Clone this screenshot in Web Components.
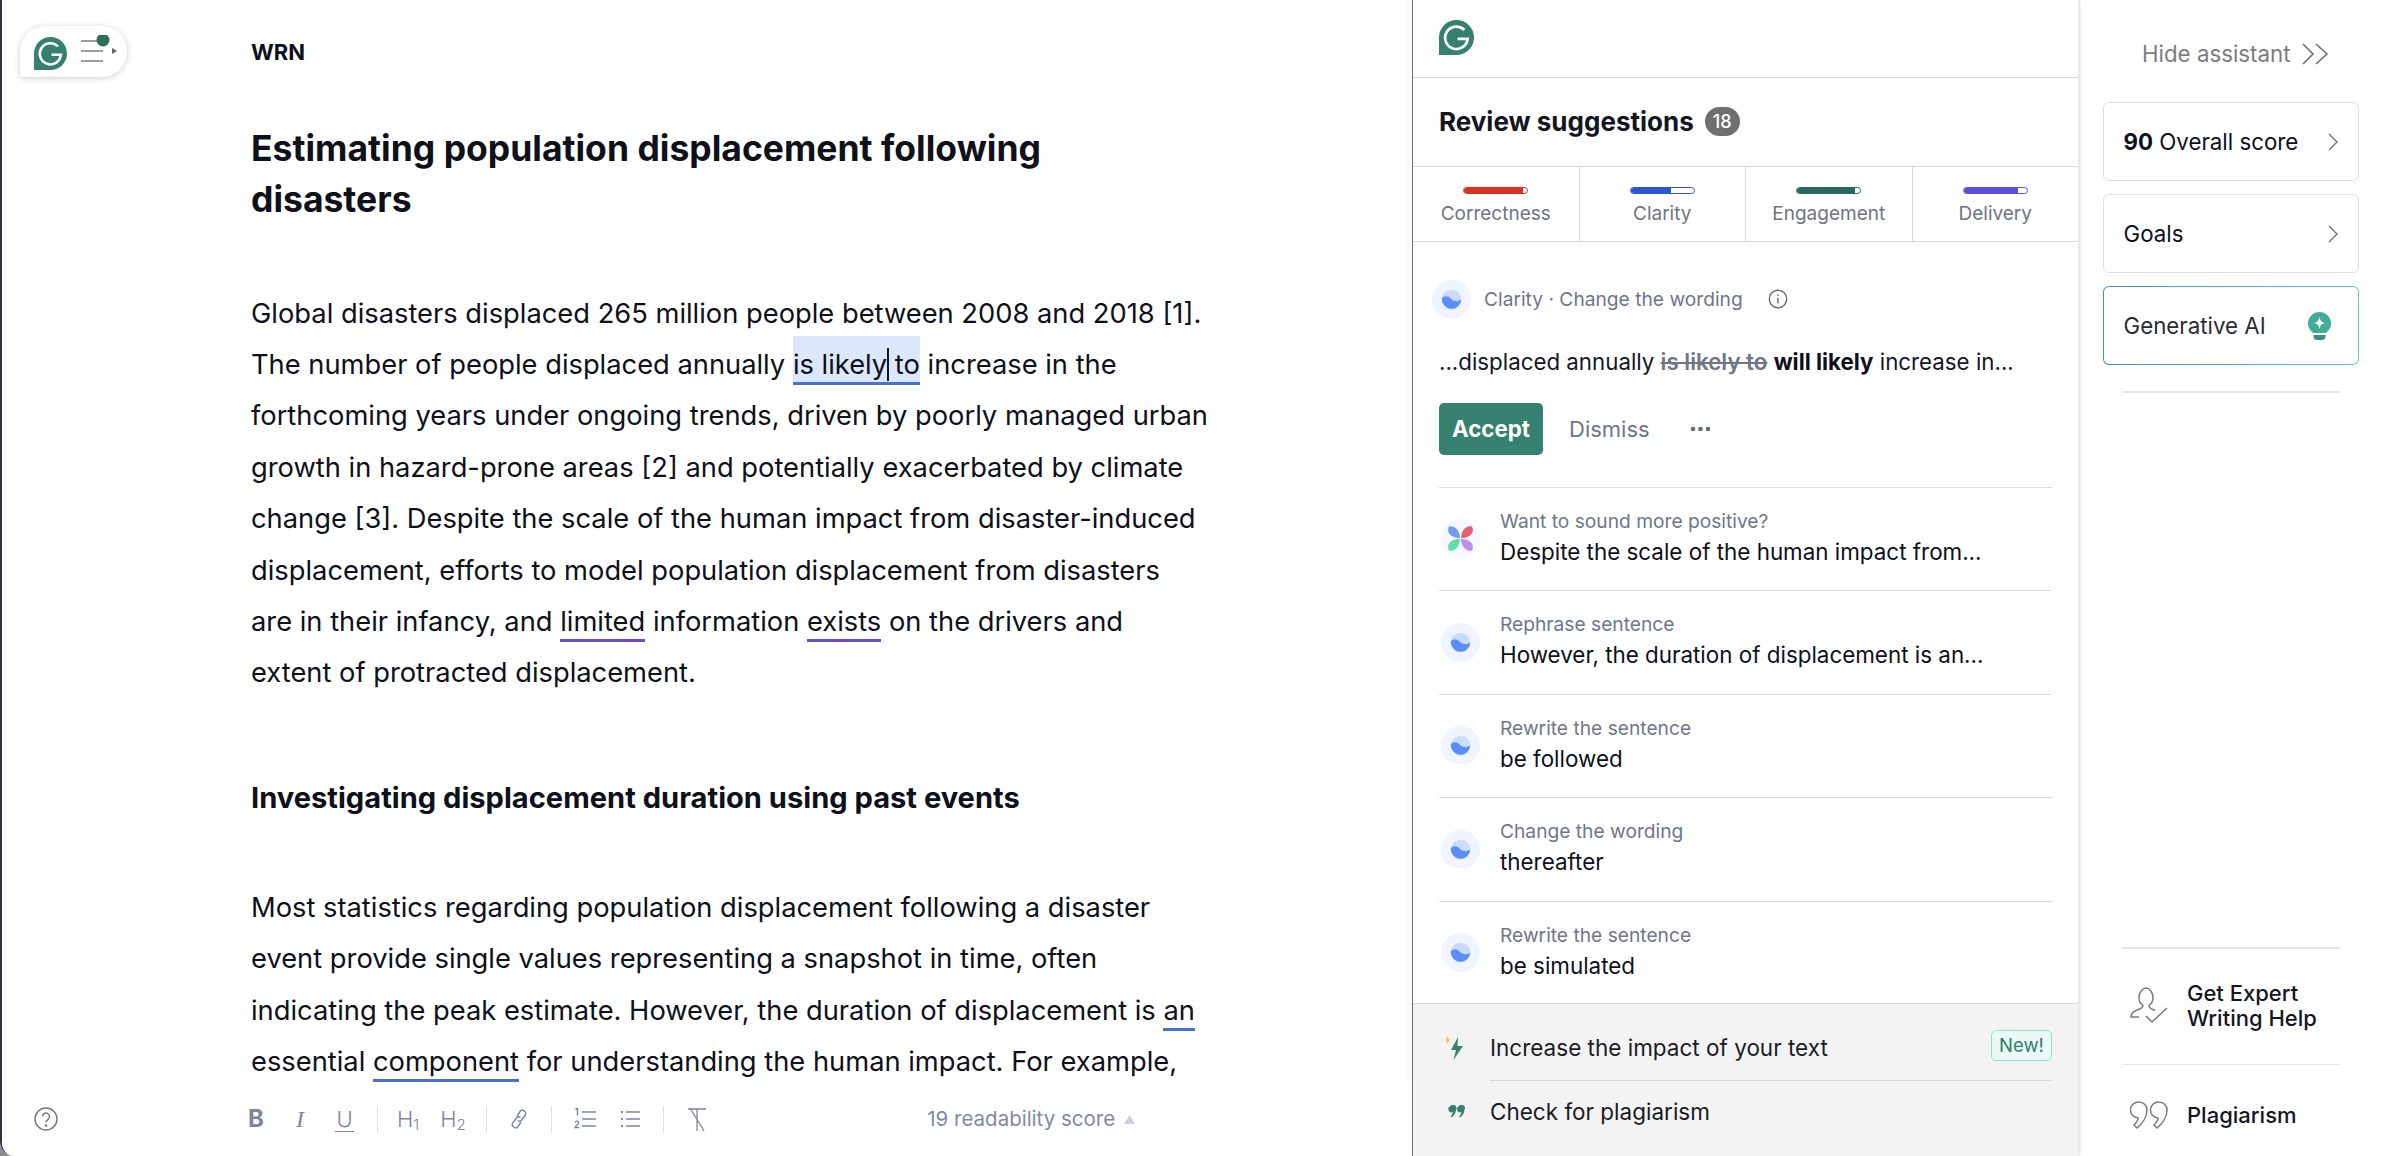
<!DOCTYPE html>
<html lang="en">
<head>
<meta charset="utf-8">
<title>Grammarly editor</title>
<style>
  html, body { margin: 0; height: 100%; background: #8c8c8c; overflow: hidden; }
  body { font-family: Inter, "Liberation Sans", sans-serif; color: #0e101a; }
</style>
</head>
<body>
<g-app>
  <g-editor slot="editor">
    <g-doc-title>Estimating population displacement following disasters</g-doc-title>
    <g-para>Global disasters displaced 265 million people between 2008 and 2018 [1].<br>The number of people displaced annually <g-mark kind="active">is likely<g-caret></g-caret> to</g-mark> increase in the<br>forthcoming years under ongoing trends, driven by poorly managed urban<br>growth in hazard-prone areas [2] and potentially exacerbated by climate<br>change [3]. Despite the scale of the human impact from disaster-induced<br>displacement, efforts to model population displacement from disasters<br>are in their infancy, and <g-mark kind="delivery">limited</g-mark> information <g-mark kind="delivery">exists</g-mark> on the drivers and<br>extent of protracted displacement.</g-para>
    <g-doc-head>Investigating displacement duration using past events</g-doc-head>
    <g-para>Most statistics regarding population displacement following a disaster<br>event provide single values representing a snapshot in time, often<br>indicating the peak estimate. However, the duration of displacement is <g-mark kind="clarity">an</g-mark><br>essential <g-mark kind="clarity">component</g-mark> for understanding the human impact. For example,</g-para>
  </g-editor>
  <g-panel slot="panel"></g-panel>
  <g-rail slot="rail"></g-rail>
</g-app>

<script>
  const LOGO = (size) => `<svg width="${size}" height="${size}" viewBox="0 0 24 24" style="display:block">
    <path d="M12 0a12 12 0 0 1 0 24H0V12A12 12 0 0 1 12 0z" fill="#36806f"/>
    <path d="M17.4 6.8A7.7 7.7 0 1 0 19.6 12.9H12.8" fill="none" stroke="#fff" stroke-width="1.9"/>
  </svg>`;

  const WAVE = `<svg width="39" height="39" viewBox="0 0 40 40" style="display:block;flex:none">
    <circle cx="20" cy="20" r="20" fill="#eff4fe"/>
    <circle cx="20" cy="20" r="10" fill="#c9dcfd"/>
    <path d="M10 19c3-3 6-3 9 0s7 4 11 1a10 10 0 0 1-20-1z" fill="#5b8dfb"/>
  </svg>`;

  const petal = "M18.500 18.500C18.500 13 15 7 9.500 7C7 7 7 9 7 11.500C7 15 12 19 18.500 18.500z";
  const FLOWER = `<svg width="39" height="39" viewBox="0 0 38 38" style="display:block;flex:none">
    <circle cx="19" cy="19" r="19" fill="#f6f8ff"/>
    <path d="${petal}" fill="#6f9bf5"/>
    <path d="${petal}" fill="#e5616f" transform="matrix(-1 0 0 1 38 0)"/>
    <path d="${petal}" fill="#5fdcb0" transform="matrix(1 0 0 -1 0 38)"/>
    <path d="${petal}" fill="#c090e8" transform="matrix(-1 0 0 -1 38 38)"/>
  </svg>`;

  class GApp extends HTMLElement {
    constructor() {
      super();
      this.attachShadow({ mode: 'open' });
      this.shadowRoot.innerHTML = `
        <style>
          :host { display: flex; width: 2402px; height: 1156px; background: #fff; border-bottom-left-radius: 14px; overflow: hidden; }
        </style>
        <slot name="editor"></slot>
        <slot name="panel"></slot>
        <slot name="rail"></slot>`;
    }
  }

  class GEditor extends HTMLElement {
    constructor() {
      super();
      this.attachShadow({ mode: 'open' });
      this.shadowRoot.innerHTML = `
        <style>
          :host { display: block; position: relative; width: 1412px; height: 1156px; box-sizing: border-box; flex: none;
            background: #fff; border-left: 2px solid #2b3442; border-bottom-left-radius: 14px; overflow: hidden; }
          .doc { padding: 36.500px 0 0 249px; width: 1000px; }
          .name { font: 700 22px/30px Inter, sans-serif; color: #0e101a; margin-bottom: 56px; }
          .strip { position: absolute; top: 0; right: 0; width: 6px; height: 1080px; background: #fafafa; }
          g-toolbar { position: absolute; left: -2px; right: 0; bottom: 0; }
          g-pill { position: absolute; left: 18px; top: 26px; }
        </style>
        <div class="doc">
          <div class="name">WRN</div>
          <slot></slot>
        </div>
        <div class="strip"></div>
        <g-pill></g-pill>
        <g-toolbar></g-toolbar>`;
    }
  }

  class GPill extends HTMLElement {
    constructor() {
      super();
      this.attachShadow({ mode: 'open' });
      this.shadowRoot.innerHTML = `
        <style>
          :host { display: block; width: 107px; height: 51px; background: #fff; border-radius: 25px 25px 25px 0;
            box-shadow: 0 1px 6px rgba(0,0,0,.2); }
          .row { display: flex; align-items: center; padding: 9px 0 0 14px; gap: 14px; }
        </style>
        <div class="row">
          ${LOGO(33)}
          <svg width="38" height="36" viewBox="0 0 38 36">
            <path d="M0 6H20M0 16H22M0 26H22" stroke="#7b7b7b" stroke-width="1.500"/>
            <circle cx="22" cy="5" r="6.500" fill="#2f6f5e"/>
            <path d="M31 13l5 3-5 3z" fill="#666"/>
          </svg>
        </div>`;
    }
  }

  class GToolbar extends HTMLElement {
    constructor() {
      super();
      this.attachShadow({ mode: 'open' });
      this.shadowRoot.innerHTML = `
        <style>
          :host { display: block; height: 72px; background: #fff; color: #7f859c; font: 400 19px/24px Inter, sans-serif; }
          .row { display: flex; align-items: center; height: 72px; box-sizing: border-box; position: relative; top: -1px; }
          .help { margin-left: 34px; margin-right: 190px; display: block; }
          .t { display: block; text-align: center; }
          .b { font: 700 24px/24px Inter, sans-serif; width: 16px; }
          .i { font: italic 300 24px/24px "Liberation Serif", serif; width: 10px; margin-left: 31px; }
          .u { font: 300 22px/24px Inter, sans-serif; width: 19px; margin-left: 30px; border-bottom: 1.500px solid #7f859c; height: 24px; }
          .sep { width: 1px; height: 26px; background: #dcdeea; }
          .h { font: 300 22px/24px Inter, sans-serif; }
          .h sub { font-size: 15px; vertical-align: -3px; line-height: 0; }
          .score { margin-left: 220.500px; color: #83899f; font-size: 20.500px; }
          .tri { margin-left: 9px; }
          svg { display: block; }
        </style>
        <div class="row">
          <svg class="help" width="24" height="26" viewBox="0 0 24 26" fill="none" stroke="#7a7a7a" stroke-width="1.500">
            <circle cx="12" cy="13" r="11"/>
            <path d="M8.500 10.500a3.500 3.500 0 1 1 5.500 2.800c-1.300.9-2 1.500-2 3"/>
            <circle cx="12" cy="19.500" r=".6" fill="#7a7a7a"/>
          </svg>
          <span class="t b">B</span>
          <span class="t i">I</span>
          <span class="t u">U</span>
          <span class="sep" style="margin-left:23px"></span>
          <span class="t h" style="margin-left:19px">H<sub>1</sub></span>
          <span class="t h" style="margin-left:21px">H<sub>2</sub></span>
          <span class="sep" style="margin-left:20px"></span>
          <svg style="margin-left:22px" width="20" height="24" viewBox="0 0 20 24" fill="none" stroke="#7f859c" stroke-width="1.400">
            <path d="M8 9l3-4.500a3.200 3.200 0 0 1 5 4l-3.500 4.500a3 3 0 0 1-4 .5"/>
            <path d="M12 15l-3 4.500a3.200 3.200 0 0 1-5-4l3.500-4.500a3 3 0 0 1 4-.5"/>
          </svg>
          <span class="sep" style="margin-left:22px"></span>
          <svg style="margin-left:22px" width="23" height="24" viewBox="0 0 23 24" fill="none" stroke="#7f859c">
            <path d="M1.500 2.500l2-1v7M8 5h14M8 12h14M8 19h14" stroke-width="1.400"/>
            <path d="M1 15.500c1-2 4-1.500 3.500.5-.3 1.200-2.500 2.500-3.500 4.500h4" stroke-width="1.300"/>
          </svg>
          <svg style="margin-left:23px" width="20" height="24" viewBox="0 0 20 24" fill="none" stroke="#7f859c" stroke-width="1.400">
            <path d="M6 5h14M6 12h14M6 19h14"/>
            <path d="M1 5h2M1 12h2M1 19h2" stroke-width="2.200"/>
          </svg>
          <span class="sep" style="margin-left:23px"></span>
          <svg style="margin-left:23px" width="20" height="26" viewBox="0 0 20 26" fill="none" stroke="#7f859c" stroke-width="1.300">
            <path d="M1 3h18M10 3v22M3 2l14 23"/>
          </svg>
          <span class="score">19 readability score</span>
          <svg class="tri" width="11" height="9" viewBox="0 0 11 9"><path d="M5.500 0L11 9H0z" fill="#c9cde0"/></svg>
        </div>`;
    }
  }

  // document blocks, each keeps its own typography
  class GDocTitle extends HTMLElement {
    constructor() {
      super();
      this.attachShadow({ mode: 'open' });
      this.shadowRoot.innerHTML = `
        <style>:host { display: block; font: 700 35.500px/51px Inter, sans-serif; color: #0e101a; width: 860px; margin-bottom: 63px; }</style>
        <slot></slot>`;
    }
  }

  class GDocHead extends HTMLElement {
    constructor() {
      super();
      this.attachShadow({ mode: 'open' });
      this.shadowRoot.innerHTML = `
        <style>:host { display: block; font: 700 29.100px/51px Inter, sans-serif; color: #0e101a; margin: 73px 0 59px; }</style>
        <slot></slot>`;
    }
  }

  class GPara extends HTMLElement {
    constructor() {
      super();
      this.attachShadow({ mode: 'open' });
      this.shadowRoot.innerHTML = `
        <style>:host { display: block; font: 400 27.300px/51.400px Inter, sans-serif; color: #0e101a; white-space: nowrap; }</style>
        <slot></slot>`;
    }
  }

  class GMark extends HTMLElement {
    constructor() {
      super();
      this.attachShadow({ mode: 'open' });
      this.shadowRoot.innerHTML = `
        <style>
          :host { display: inline; padding: 0 0 1.500px; border-bottom: 3px solid #4a6fd4; }
          :host([kind="active"]) { background: #dbe8fb; padding-top: 12px; }
          :host([kind="delivery"]) { border-bottom-color: #6b4bd0; }
        </style>
        <slot></slot>`;
    }
  }

  class GCaret extends HTMLElement {
    constructor() {
      super();
      this.attachShadow({ mode: 'open' });
      this.shadowRoot.innerHTML = `
        <style>:host { display: inline-block; position: relative; width: 0; height: 0; }
          i { position: absolute; left: 0; top: -26px; width: 2px; height: 33px; background: #14161f; }</style>
        <i></i>`;
    }
  }

  class GTab extends HTMLElement {
    constructor() {
      super();
      this.attachShadow({ mode: 'open' });
      const color = this.getAttribute('color');
      const fill = this.getAttribute('fill');
      this.shadowRoot.innerHTML = `
        <style>
          :host { display: flex; flex-direction: column; align-items: center; flex: 1; border-right: 1px solid #d9d9d9;
            font: 400 19px/26px Inter, sans-serif; color: #6f7482; }
          :host(:last-child) { border-right: 0; }
          .bar { width: 65px; height: 7px; box-sizing: border-box; border: 1.200px solid ${color}; border-radius: 4px; margin: 20px 0 7px; background: #fff; overflow: hidden; }
          .fill { height: 100%; width: ${fill}%; background: ${color}; }
        </style>
        <div class="bar"><div class="fill"></div></div>
        <slot></slot>`;
    }
  }

  class GSuggestion extends HTMLElement {
    constructor() {
      super();
      this.attachShadow({ mode: 'open' });
      const icon = this.getAttribute('icon') === 'flower' ? FLOWER : WAVE;
      this.shadowRoot.innerHTML = `
        <style>
          :host { display: flex; align-items: center; gap: 20px; height: 103.500px; box-sizing: border-box; border-top: 1.500px solid #dcdcdc; padding-left: 2px; }
          .label { font: 400 19.200px/24px Inter, sans-serif; color: #6f7689; margin-bottom: 5px; }
          .text { font: 400 22.400px/28px Inter, sans-serif; color: #0e101a; }
          .box { padding-bottom: 3px; }
        </style>
        ${icon}
        <div class="box">
          <div class="label">${this.getAttribute('label')}</div>
          <div class="text"><slot></slot></div>
        </div>`;
    }
  }

  class GPanel extends HTMLElement {
    constructor() {
      super();
      this.attachShadow({ mode: 'open' });
      this.shadowRoot.innerHTML = `
        <style>
          :host { display: flex; flex-direction: column; width: 666px; height: 1156px; flex: none; box-sizing: border-box;
            background: #fff; border-left: 1px solid #6b6b6b; box-shadow: 2px 0 3px rgba(0,0,0,.13); position: relative; z-index: 1; }
          .logo { height: 77.500px; padding: 20px 0 0 26px; box-sizing: border-box; border-bottom: 1.500px solid #d9d9d9; }
          .title { display: flex; align-items: center; gap: 11px; height: 89px; box-sizing: border-box; padding-left: 26px;
            border-bottom: 1.500px solid #d9d9d9; font: 700 26px/30px Inter, sans-serif; color: #14161f; }
          .badge { width: 35px; height: 29px; border-radius: 15px; background: #6f6f6f; color: #fff; font: 500 18px/29px Inter, sans-serif; text-align: center; }
          .tabs { display: flex; height: 75px; box-sizing: border-box; border-bottom: 1.500px solid #d9d9d9; }
          .card { padding: 38px 26px 0; }
          .head { display: flex; align-items: center; margin-left: -7px; color: #6f7689; font: 400 19.200px/39px Inter, sans-serif; }
          .head span { margin-left: 13px; }
          .head svg:last-child { margin-left: 25px; }
          .sample { font: 400 22.300px/32px Inter, sans-serif; color: #14161f; margin-top: 27px; white-space: nowrap; }
          s { color: #6f7689; font-weight: 600; }
          b { font-weight: 700; color: #0e101a; }
          .actions { display: flex; align-items: center; margin-top: 25px; }
          .accept { width: 104px; height: 52px; border-radius: 5px; background: #36806f; color: #fff; font: 700 22.300px/52px Inter, sans-serif; text-align: center; }
          .dismiss { margin-left: 26px; font: 400 22px/52px Inter, sans-serif; color: #6f7689; }
          .dots { margin-left: 40px; display: block; }
          .list { padding: 0 26px; height: 516px; box-sizing: border-box; margin-top: 32px; }
          .foot { flex: 1; background: #f3f3f3; border-top: 1.500px solid #d9d9d9; padding: 0 26px 0 32px; }
          .f { display: flex; align-items: center; box-sizing: border-box; font: 400 22.500px/28px Inter, sans-serif; color: #1a1c25; }
          .f svg { width: 45px; flex: none; }
          .one { height: 76px; padding-top: 12px; }
          .two { height: 62px; }
          .rule { height: 1.500px; background: #d9d9d9; margin-left: 45px; }
          .new { margin-left: auto; width: 61px; height: 31px; box-sizing: border-box; border: 1.300px solid #8fe0d0; border-radius: 5px; background: #e9faf7;
            color: #2f7d6c; font: 400 18.500px/28px Inter, sans-serif; text-align: center; position: relative; top: -2px; }
        </style>
        <div class="logo">${LOGO(35)}</div>
        <div class="title">Review suggestions <span class="badge">18</span></div>
        <div class="tabs">
          <g-tab color="#d9301f" fill="93">Correctness</g-tab>
          <g-tab color="#2b55d1" fill="64">Clarity</g-tab>
          <g-tab color="#2a6a5c" fill="91">Engagement</g-tab>
          <g-tab color="#5a4fd8" fill="86">Delivery</g-tab>
        </div>
        <div class="card">
          <div class="head">
            ${WAVE}
            <span>Clarity · Change the wording</span>
            <svg width="20" height="20" viewBox="0 0 20 20" fill="none" stroke="#666b78" stroke-width="1.400">
              <circle cx="10" cy="10" r="8.700"/><path d="M10 9v5.500M10 5.500v1.600"/>
            </svg>
          </div>
          <div class="sample">...displaced annually <s>is likely to</s> <b>will likely</b> increase in...</div>
          <div class="actions">
            <div class="accept">Accept</div>
            <div class="dismiss">Dismiss</div>
            <svg class="dots" width="21" height="6" viewBox="0 0 21 6" fill="#666b78"><circle cx="3" cy="3" r="2.300"/><circle cx="10.500" cy="3" r="2.300"/><circle cx="18" cy="3" r="2.300"/></svg>
          </div>
        </div>
        <div class="list">
          <g-suggestion icon="flower" label="Want to sound more positive?">Despite the scale of the human impact from...</g-suggestion>
          <g-suggestion label="Rephrase sentence">However, the duration of displacement is an...</g-suggestion>
          <g-suggestion label="Rewrite the sentence">be followed</g-suggestion>
          <g-suggestion label="Change the wording">thereafter</g-suggestion>
          <g-suggestion label="Rewrite the sentence">be simulated</g-suggestion>
        </div>
        <div class="foot">
          <div class="f one">
            <svg height="26" viewBox="0 0 45 26" preserveAspectRatio="xMinYMid meet">
              <path d="M2.500 0C3 3 3.500 4 5 5C3.500 6 3 7 2.500 10C2 7 1.500 6 0 5C1.500 4 2 3 2.500 0z" fill="#f4c04e"/>
              <path d="M13 2L6 15h5l-2.500 10L18 11h-5.500z" fill="#36806f"/>
            </svg>
            Increase the impact of your text
            <span class="new">New!</span>
          </div>
          <div class="rule"></div>
          <div class="f two">
            <svg height="14" viewBox="0 0 45 14" preserveAspectRatio="xMinYMid meet">
              <path d="M5 1.500A3 3 0 1 1 11 4.500C11 8 9 11 6.500 12.500L5.500 11.500C7 10 7.800 8.500 8 7A3 3 0 0 1 5 1.500zM13.500 1.500A3 3 0 1 1 19.500 4.500C19.500 8 17.500 11 15 12.500L14 11.500C15.500 10 16.300 8.500 16.500 7A3 3 0 0 1 13.500 1.500z" fill="#36806f"/>
            </svg>
            Check for plagiarism
          </div>
        </div>`;
    }
  }

  class GRailCard extends HTMLElement {
    constructor() {
      super();
      this.attachShadow({ mode: 'open' });
      this.shadowRoot.innerHTML = `
        <style>
          :host { display: flex; align-items: center; justify-content: space-between; height: 79px; box-sizing: border-box;
            padding: 0 20.500px 0 19.500px; border: 1.500px solid #dcdcec; border-radius: 6px; font: 400 22.300px/28px Inter, sans-serif; color: #0e101a; }
          :host([ai]) { border-color: transparent; padding-right: 27px;
            background: linear-gradient(#fff,#fff) padding-box, linear-gradient(90deg,#4a86e8,#5fd0b5) border-box; color: #2a2c34; }
          ::slotted(b) { font-weight: 700; }
        </style>
        <span><slot></slot></span>
        <slot name="icon">
          <svg width="10" height="18" viewBox="0 0 10 18" fill="none" stroke="#6f6f6f" stroke-width="1.400"><path d="M1 1l8 8-8 8"/></svg>
        </slot>`;
    }
  }

  class GRail extends HTMLElement {
    constructor() {
      super();
      this.attachShadow({ mode: 'open' });
      this.shadowRoot.innerHTML = `
        <style>
          :host { display: flex; flex-direction: column; width: 324px; height: 1156px; flex: none; box-sizing: border-box; padding: 0 43px 0 25px; background: #fff; }
          .hide { display: flex; align-items: center; gap: 10px; height: 108px; padding: 0 0 0 39px; font: 400 22.300px/28px Inter, sans-serif; color: #7c7c7c; white-space: nowrap; box-sizing: border-box; margin-bottom: -6px; }
          .cards { display: flex; flex-direction: column; gap: 13px; }
          .rule { height: 1.500px; background: #e5e5ee; margin: 0 19px; }
          .item { display: flex; align-items: center; gap: 19px; margin: 0 19px 0 27px; font: 500 22px/25px Inter, sans-serif; color: #14161f; white-space: nowrap; }
        </style>
        <div class="hide">Hide assistant
          <svg width="28" height="22" viewBox="0 0 28 22" fill="none" stroke="#6f6f6f" stroke-width="1.600"><path d="M2 1l10 10L2 21M15 1l11 10-11 10"/></svg>
        </div>
        <div class="cards">
          <g-rail-card><b>90</b> Overall score</g-rail-card>
          <g-rail-card>Goals</g-rail-card>
          <g-rail-card ai>Generative AI
            <svg slot="icon" width="23" height="28" viewBox="0 0 23 28">
              <path d="M11.500 0A11.500 11.500 0 0 1 18 21H5A11.500 11.500 0 0 1 11.500 0z" fill="#3fae94"/>
              <path d="M5.500 23h12a3 4 0 0 1-3 5h-6a3 4 0 0 1-3-5z" fill="#3f8f7e"/>
              <path d="M11.500 4.500C12 8.500 13.500 10.500 17 11C13.500 11.500 12 13.500 11.500 17.500C11 13.500 9.500 11.500 6 11C9.500 10.500 11 8.500 11.500 4.500z" fill="#fff"/>
            </svg>
          </g-rail-card>
        </div>
        <div class="rule" style="margin-top:26px"></div>
        <div style="flex:1"></div>
        <div class="rule"></div>
        <div class="item" style="height:115px">
          <svg width="38" height="38" viewBox="0 0 38 38" fill="none" stroke="#7a7a7a" stroke-width="1.500" style="flex:none">
            <path d="M9 30H1c0-3 2-5 5-6.500 4-1.800 7-2 7-5-3-2-4-5-4-8C9 5 13 1 16 1s7 4 7 9.500c0 3-1 6-4 8 0 2 2 3.500 6 5"/>
            <path d="M16 29l6 6L37 21"/>
          </svg>
          <span>Get Expert<br>Writing Help</span>
        </div>
        <div class="rule"></div>
        <div class="item" style="height:91px;align-items:flex-start;padding-top:36px;box-sizing:border-box">
          <svg width="38" height="28" viewBox="0 0 38 28" fill="none" stroke="#7a7a7a" stroke-width="1.500" style="flex:none">
            <path d="M9 1a8 8 0 0 1 8 8c0 7-5 14-10 18l-3-3c2-2 4-4 4-7A8 8 0 0 1 9 1zM29 1a8 8 0 0 1 8 8c0 7-5 14-10 18l-3-3c2-2 4-4 4-7a8 8 0 0 1 1-16z"/>
          </svg>
          <span style="line-height:28px">Plagiarism</span>
        </div>`;
    }
  }

  customElements.define('g-app', GApp);
  customElements.define('g-editor', GEditor);
  customElements.define('g-pill', GPill);
  customElements.define('g-toolbar', GToolbar);
  customElements.define('g-doc-title', GDocTitle);
  customElements.define('g-doc-head', GDocHead);
  customElements.define('g-para', GPara);
  customElements.define('g-mark', GMark);
  customElements.define('g-caret', GCaret);
  customElements.define('g-tab', GTab);
  customElements.define('g-suggestion', GSuggestion);
  customElements.define('g-panel', GPanel);
  customElements.define('g-rail-card', GRailCard);
  customElements.define('g-rail', GRail);
</script>
</body>
</html>
